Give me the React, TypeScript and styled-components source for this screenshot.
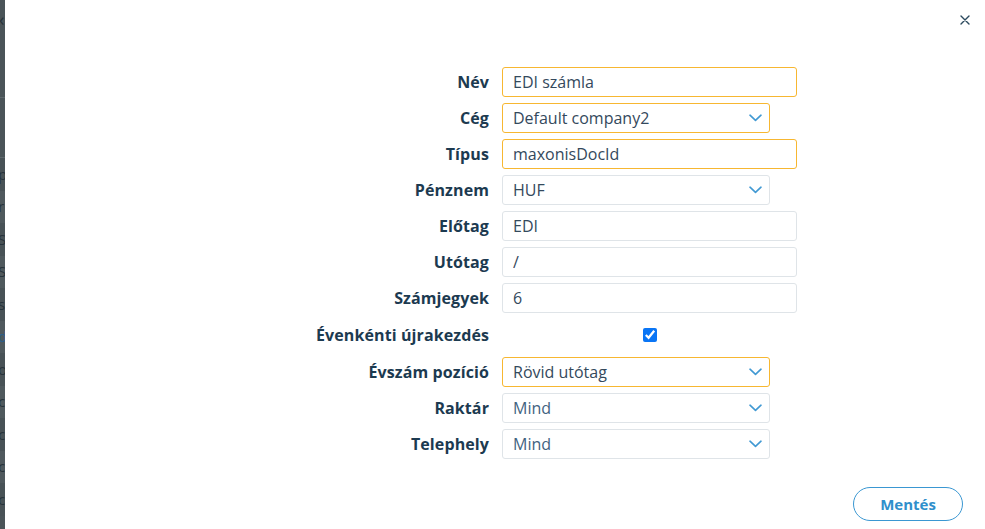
import React from "react";
import styled, { createGlobalStyle } from "styled-components";

const Global = createGlobalStyle`
  html, body { margin: 0; padding: 0; height: 100%; }
  body { font-family: "Open Sans", "Noto Sans", sans-serif; background: #fff; overflow: hidden; }
  #root { height: 100%; }
  * { box-sizing: border-box; }
`;

const Page = styled.div`
  display: flex;
  height: 529px;
  width: 985px;
`;

const Backdrop = styled.div`
  width: 5px;
  flex: none;
  background: #4a5458;
  overflow: hidden;
  display: flex;
  flex-direction: column;
  color: #2b3b48;
  font-size: 15px;
  line-height: 1;
`;

const BackTop = styled.div<{ $h: number }>`
  height: ${(p) => p.$h}px;
  flex: none;
  border-bottom: 1px solid #5d676b;
  padding-top: 10px;
  margin-left: -1px;
  color: #28333a;
  font-size: 18px;
`;

const BackRow = styled.div<{ $alt?: boolean; $blue?: boolean }>`
  height: 32.5px;
  flex: none;
  display: flex;
  align-items: center;
  background: ${(p) => (p.$alt ? "#4f595d" : "#485256")};
  color: ${(p) => (p.$blue ? "#2a5f8c" : "#27333b")};
  padding-left: 0;
  margin-left: -2px;
  white-space: nowrap;
`;

const Modal = styled.div`
  flex: 1;
  background: #fff;
  display: flex;
  flex-direction: column;
`;

const Header = styled.div`
  height: 40px;
  display: flex;
  justify-content: flex-end;
  padding: 14px 14px 0 0;
`;

const CloseButton = styled.button`
  width: 12px;
  height: 12px;
  padding: 0;
  border: none;
  background: transparent;
  display: flex;
  align-items: center;
  justify-content: center;
  cursor: pointer;
`;

const Form = styled.div`
  margin-top: 27px;
  margin-left: 300px;
  display: grid;
  grid-template-columns: 184px 295px;
  column-gap: 13px;
  row-gap: 6px;
`;

const Label = styled.label`
  align-self: center;
  text-align: right;
  font-weight: 700;
  font-size: 16px;
  color: #1c3a50;
  white-space: nowrap;
  letter-spacing: 0.1px;
`;

const Input = styled.input<{ $focus?: boolean }>`
  height: 30px;
  width: 295px;
  border: 1px solid ${(p) => (p.$focus ? "#f7b731" : "#dfe4e8")};
  border-radius: 3px;
  padding: 0 10px;
  font-family: "Open Sans", "Noto Sans", sans-serif;
  font-size: 16px;
  color: #34495c;
  outline: none;
  background: #fff;
`;

const SelectBox = styled.div<{ $focus?: boolean }>`
  height: 30px;
  width: 268px;
  border: 1px solid ${(p) => (p.$focus ? "#f7b731" : "#dfe4e8")};
  border-radius: 3px;
  padding: 0 7px 0 10px;
  display: flex;
  align-items: center;
  justify-content: space-between;
  background: #fff;
`;

const SelectText = styled.span<{ $muted?: boolean }>`
  font-size: 16px;
  color: ${(p) => (p.$muted ? "#42637f" : "#34495c")};
`;

const CheckCell = styled.div`
  height: 32px;
  display: flex;
  align-items: center;
  justify-content: center;
`;

const Check = styled.input`
  width: 14px;
  height: 14px;
  margin: 0;
  accent-color: #0a75f5;
`;

const Footer = styled.div`
  margin-top: auto;
  display: flex;
  justify-content: flex-end;
  padding: 0 22px 8px 0;
`;

const SaveButton = styled.button`
  width: 110px;
  height: 34px;
  border: 1.5px solid #3a97d2;
  border-radius: 17px;
  background: #fff;
  color: #2f8fcb;
  font-family: "Open Sans", "Noto Sans", sans-serif;
  font-weight: 700;
  font-size: 15px;
  cursor: pointer;
  padding: 0;
`;

const Chevron = () => (
  <svg width="13" height="8" viewBox="0 0 13 8" fill="none">
    <path d="M1 1.2 L6.5 6.4 L12 1.2" stroke="#4199d3" strokeWidth="1.6" strokeLinecap="round" strokeLinejoin="round" />
  </svg>
);

const Select = ({ value, focus, muted }: { value: string; focus?: boolean; muted?: boolean }) => (
  <SelectBox $focus={focus}>
    <SelectText $muted={muted}>{value}</SelectText>
    <Chevron />
  </SelectBox>
);

const backRows: { g: string; blue?: boolean }[] = [
  { g: "p" }, { g: "r" }, { g: "S" }, { g: "S" }, { g: "s" }, { g: "d", blue: true },
  { g: "o" }, { g: "c" }, { g: "c" }, { g: "c" }, { g: "c" },
];

export default function App() {
  return (
    <>
      <Global />
      <Page>
        <Backdrop>
          <BackTop $h={98}>‹</BackTop>
          <BackTop $h={60} />
          {backRows.map((r, i) => (
            <BackRow key={i} $alt={i % 2 === 1} $blue={r.blue}>
              {r.g}
            </BackRow>
          ))}
        </Backdrop>
        <Modal>
          <Header>
            <CloseButton aria-label="Bezárás">
              <svg width="10" height="10" viewBox="0 0 10 10">
                <path d="M1 1 L9 9 M9 1 L1 9" stroke="#2c4a5e" strokeWidth="1.4" strokeLinecap="round" />
              </svg>
            </CloseButton>
          </Header>
          <Form>
            <Label>Név</Label>
            <Input $focus defaultValue="EDI számla" />
            <Label>Cég</Label>
            <Select value="Default company2" focus />
            <Label>Típus</Label>
            <Input $focus defaultValue="maxonisDocId" />
            <Label>Pénznem</Label>
            <Select value="HUF" />
            <Label>Előtag</Label>
            <Input defaultValue="EDI" />
            <Label>Utótag</Label>
            <Input defaultValue="/" />
            <Label>Számjegyek</Label>
            <Input defaultValue="6" />
            <Label>Évenkénti újrakezdés</Label>
            <CheckCell>
              <Check type="checkbox" defaultChecked />
            </CheckCell>
            <Label>Évszám pozíció</Label>
            <Select value="Rövid utótag" focus />
            <Label>Raktár</Label>
            <Select value="Mind" muted />
            <Label>Telephely</Label>
            <Select value="Mind" muted />
          </Form>
          <Footer>
            <SaveButton>Mentés</SaveButton>
          </Footer>
        </Modal>
      </Page>
    </>
  );
}
